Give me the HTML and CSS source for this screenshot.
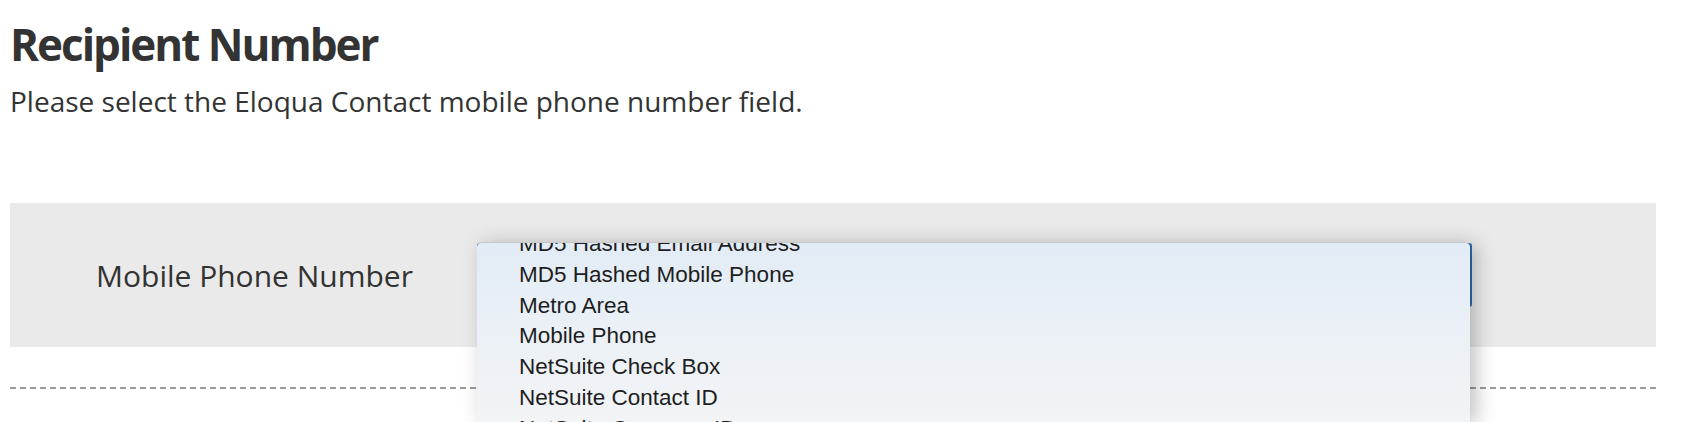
FILE: index.html
```html
<!DOCTYPE html>
<html lang="en">
<head>
<meta charset="utf-8">
<title>Recipient Number</title>
<link rel="stylesheet" href="styles.css">
</head>
<body>
<div class="page">
  <h1 class="title">Recipient Number</h1>
  <p class="subtitle">Please select the Eloqua Contact mobile phone number field.</p>
  <div class="field-row">
    <label class="field-label">Mobile Phone Number</label>
    <div class="select-wrap">
      <div class="select-box"></div>
      <div class="menu">
        <ul class="menu-list">
          <li>MD5 Hashed Email Address</li>
          <li>MD5 Hashed Mobile Phone</li>
          <li>Metro Area</li>
          <li>Mobile Phone</li>
          <li>NetSuite Check Box</li>
          <li>NetSuite Contact ID</li>
          <li>NetSuite Company ID</li>
        </ul>
      </div>
    </div>
  </div>
  <div class="divider"></div>
</div>
</body>
</html>
```

FILE: styles.css
```css
html {
  margin: 0;
  padding: 0;
  background: #fff;
}
body {
  margin: 0;
  padding: 0;
}
.page {
  box-sizing: border-box;
  min-height: 422px;
  padding: 0 26px 0 10px;
  font-family: "Open Sans", "Liberation Sans", sans-serif;
  color: #333;
  overflow: hidden;
}
.title {
  margin: 18px 0 0;
  font-size: 44px;
  line-height: 52px;
  font-weight: 700;
  letter-spacing: -2px;
  color: #333;
}
.subtitle {
  margin: 12px 0 0;
  font-size: 28px;
  line-height: 38px;
  color: #333;
}
.field-row {
  margin-top: 83px;
  height: 144px;
  background: #eaeaea;
  display: flex;
  align-items: center;
}
.field-label {
  flex: 0 0 467px;
  padding-left: 86px;
  box-sizing: border-box;
  white-space: nowrap;
  font-size: 30px;
  color: #333;
}
.select-wrap {
  position: relative;
  flex: 0 0 995px;
  height: 64px;
}
.select-box {
  height: 64px;
  box-sizing: border-box;
  border: 3px solid #2e6db0;
  border-radius: 3px;
  background: #fff;
}
.menu {
  position: absolute;
  left: 0;
  top: -1px;
  width: 993px;
  height: 180px;
  overflow: hidden;
  border-radius: 5px 5px 0 0;
  border-top: 1px solid rgba(0,0,0,0.18);
  box-sizing: border-box;
  background: linear-gradient(180deg, #e2ecf6 0px, #eaf0f6 80px, #f2f4f6 180px);
  box-shadow: 6px 2px 20px rgba(0,0,0,0.25);
}
.menu-list {
  list-style: none;
  margin: -14px 0 0;
  padding: 0 0 0 42px;
  font-family: "Liberation Sans", Arial, sans-serif;
  font-size: 22.5px;
  line-height: 30.75px;
  color: #1e1e1e;
}
.divider {
  margin-top: 40px;
  border-top: 2px dashed #9a9a9a;
}
```
